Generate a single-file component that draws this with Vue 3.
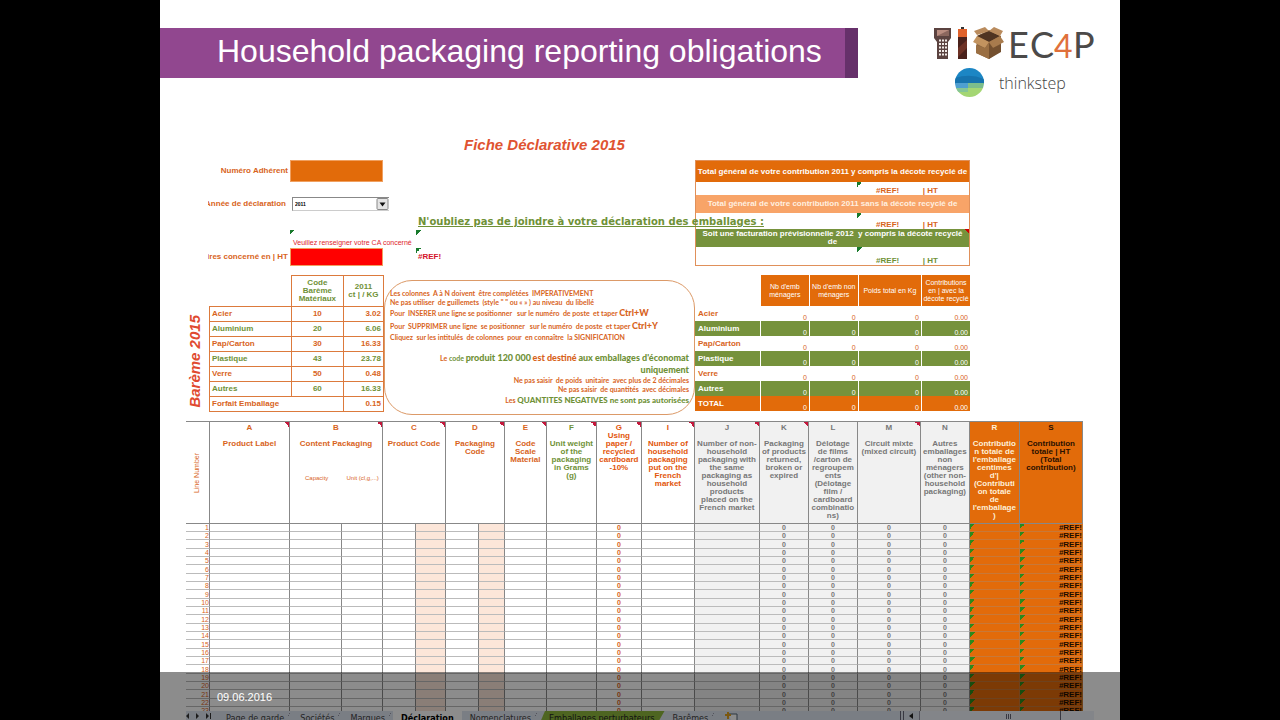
<script setup>
const scale = [
  ['Acier', '10', '3.02'],
  ['Aluminium', '20', '6.06'],
  ['Pap/Carton', '30', '16.33'],
  ['Plastique', '43', '23.78'],
  ['Verre', '50', '0.48'],
  ['Autres', '60', '16.33'],
]
const totals = ['Acier', 'Aluminium', 'Pap/Carton', 'Plastique', 'Verre', 'Autres', 'TOTAL']

const widths = [24, 80, 52, 41, 33, 30, 33, 26, 42, 50, 45, 53, 65, 49, 49, 63, 49, 50, 63]
const sum = widths.reduce((a, b) => a + b, 0)
const cols = widths.map((w) => (w / sum) * 100 + '%')

const heads = [
  { l: 'A', t: 'Product Label', c: 'note' },
  { l: 'B', t: 'Content Packaging', c: 'note', span: 2, sub: true },
  { l: 'C', t: 'Product Code', c: 'note', span: 2 },
  { l: 'D', t: 'Packaging\nCode', c: 'note', span: 2 },
  { l: 'E', t: 'Code\nScale\nMaterial', c: 'note' },
  { l: 'F', t: 'Unit weight\nof the\npackaging\nin Grams\n(g)', c: 'note olive' },
  { l: 'G', t: 'Using\npaper /\nrecycled\ncardboard\n-10%', c: 'note tight vivid' },
  { l: 'I', t: 'Number of\nhousehold\npackaging\nput on the\nFrench\nmarket', c: 'note vivid' },
  { l: 'J', t: 'Number of non-\nhousehold\npackaging with\nthe same\npackaging as\nhousehold\nproducts\nplaced on the\nFrench market', c: 'note grey' },
  { l: 'K', t: 'Packaging\nof products\nreturned,\nbroken or\nexpired', c: 'note grey' },
  { l: 'L', t: 'Délotage\nde films\n/carton de\nregroupem\nents\n(Délotage\nfilm /\ncardboard\ncombinatio\nns)', c: 'grey' },
  { l: 'M', t: 'Circuit mixte\n(mixed circuit)', c: 'note grey' },
  { l: 'N', t: 'Autres\nemballages\nnon\nménagers\n(other non-\nhousehold\npackaging)', c: 'grey' },
  { l: 'R', t: "Contributio\nn totale de\nl'emballage\ncentimes\nd'|\n(Contributi\non totale\nde\nl'emballage\n)", c: 'fill pale' },
  { l: 'S', t: 'Contribution\ntotale | HT\n(Total\ncontribution)', c: 'fill dark' },
]
const cells = [
  '', '', '', '', 'peach', '', 'peach', '', '', 'zero', '', 'grey', 'grey zero', 'grey zero', 'grey zero', 'grey zero', 'fill flag', 'fill flag ref',
]
const tabs = [
  { t: 'Page de garde' },
  { t: 'Sociétés' },
  { t: 'Marques' },
  { t: 'Déclaration', c: 'current' },
  { t: 'Nomenclatures' },
  { t: 'Emballages perturbateurs', c: 'green' },
  { t: 'Barêmes' },
]
</script>

<template>
  <main class="slide">
    <header class="top">
      <h1>Household packaging reporting obligations</h1>
      <svg class="logo" viewBox="0 0 162 74" role="img" aria-label="TIC EC4P thinkstep">
        <path d="M1 3h17v10l-3 4v17H4V17l-3-4z" fill="#5b4340" />
        <path d="M4 5h12v6H4z" fill="#b98d80" />
        <path d="M4 11L16 5v6z" fill="#8b675e" />
        <path d="M6 15.500h8M6 19h8M6 22.500h8M6 26h8M6 29.500h8" stroke="#f3ece8" stroke-width="2" stroke-dasharray="2 1" />
        <path d="M28 2h3v2h-3z" fill="#333" />
        <path d="M25 4h9v8h-9z" fill="#e0622c" />
        <path d="M25 12h9v22h-9z" fill="#4a211b" />
        <path d="M25 23l9-8v8l-9 9z" fill="#6d3125" />
        <path d="M44 11l12-6 12 6v14l-12 9-13-6z" fill="#8d6640" />
        <path d="M44 11l12-5 11 5-11 6z" fill="#4f3422" />
        <path d="M44 10l-3-4 11-4 4 4zM56 6l5-4 9 4-3 5z" fill="#b98b5d" />
        <path d="M44 11l12 6-4 6-12-6z" fill="#c2935f" />
        <path d="M67 11l-11 6 4 6 11-6z" fill="#a87b4d" />
        <path d="M43 20l9 3 4-5v16l-13-6z" fill="#9a6f43" />
        <path d="M56 18l4 5 8-4v8l-12 7z" fill="#74502f" />
        <g class="brand">
          <text x="75" y="33">E</text>
          <text x="97" y="33">C</text>
          <text class="four" x="121" y="33">4</text>
          <text x="140" y="33">P</text>
        </g>
        <clipPath id="ball"><circle cx="36.500" cy="57.500" r="14.500" /></clipPath>
        <g clip-path="url(#ball)">
          <path d="M22 43h29v15H22z" fill="#1c86c4" />
          <path d="M22 53q15-5 29 1v5H22z" fill="#1673ae" />
          <path d="M22 58h13v5H22z" fill="#4f9fd0" />
          <path d="M35 58h16v5H35z" fill="#7cbd8c" />
          <path d="M22 63h29v10H22z" fill="#a4d673" />
          <path d="M22 63h13v4H22z" fill="#85c596" />
        </g>
        <text class="step" x="66" y="64">thinkstep</text>
      </svg>
    </header>

    <h2>Fiche Déclarative 2015</h2>

    <section class="upper">
      <form class="fields">
        <label for="num" class="numlabel">Numéro Adhérent</label>
        <input id="num" class="num" type="text" />
        <label for="year" class="yearlabel">Année de déclaration</label>
        <span class="pick">
          <select id="year"><option>2011</option></select>
          <svg viewBox="0 0 12 12" aria-hidden="true"><rect x=".5" y=".5" width="11" height="11" rx="1" fill="#e4e4e4" stroke="#888" /><path d="M3 4.500h6l-3 4z" fill="#111" /></svg>
        </span>
        <span class="hint flagged">Veuillez renseigner votre CA concerné</span>
        <label for="ca" class="calabel">ires concerné en | HT</label>
        <input id="ca" class="ca" type="text" />
      </form>
      <div class="reminder">
        <p class="join">N'oubliez pas de joindre à votre déclaration des emballages :</p>
        <p class="blank flagged"></p>
        <p class="err flagged">#REF!</p>
      </div>
      <table class="general">
        <colgroup><col class="wide" /><col class="mid" /><col /></colgroup>
        <tbody>
          <tr class="bar first"><th colspan="3">Total général de votre contribution 2011 y compris la décote recyclé de</th></tr>
          <tr class="r1"><td></td><td class="flagged">#REF!</td><td>| HT</td></tr>
          <tr class="bar light"><th colspan="3">Total général de votre contribution 2011 sans la décote recyclé de</th></tr>
          <tr class="r2"><td></td><td class="flagged">#REF!</td><td>| HT</td></tr>
          <tr class="bar olivebar"><th colspan="3">Soit une facturation prévisionnelle 2012 &nbsp;y compris la décote recyclé<br />de</th></tr>
          <tr class="r3"><td></td><td class="flagged">#REF!</td><td>| HT</td></tr>
        </tbody>
      </table>
    </section>

    <section class="lower">
      <h3>Barème 2015</h3>
      <table class="scale">
        <colgroup><col class="c1" /><col class="c2" /><col class="c3" /></colgroup>
        <thead>
          <tr><td></td><th>Code<br />Barème<br />Matériaux</th><th>2011<br />ct | / KG</th></tr>
        </thead>
        <tbody>
          <tr v-for="r in scale" :key="r[0]"><th>{{ r[0] }}</th><td class="code">{{ r[1] }}</td><td>{{ r[2] }}</td></tr>
          <tr><th colspan="2">Forfait Emballage</th><td>0.15</td></tr>
        </tbody>
      </table>
      <div class="guide">
        <p>Les colonnes&nbsp; A à N doivent&nbsp; être complétées&nbsp; IMPERATIVEMENT</p>
        <p>Ne pas utiliser&nbsp; de guillemets&nbsp; (style " " ou « » ) au niveau&nbsp; du libellé</p>
        <p class="tall">Pour&nbsp; INSERER une ligne se positionner&nbsp; &nbsp;sur le numéro&nbsp; de poste&nbsp; et taper <b>Ctrl+W</b></p>
        <p class="tall">Pour&nbsp; SUPPRIMER une ligne&nbsp; se positionner&nbsp; &nbsp;sur le numéro&nbsp; de poste&nbsp; et taper <b>Ctrl+Y</b></p>
        <p>Cliquez&nbsp; sur les intitulés&nbsp; de colonnes&nbsp; pour&nbsp; en connaître&nbsp; la SIGNIFICATION</p>
        <p class="end big gap">Le <i>code</i> <b class="olive">produit 120 000</b> <b>est destiné</b> <b class="olive">aux emballages d'économat</b></p>
        <p class="end big"><b class="olive">uniquement</b></p>
        <p class="end">Ne pas saisir&nbsp; de poids&nbsp; unitaire&nbsp; avec plus de 2 décimales</p>
        <p class="end">Ne pas saisir&nbsp; de quantités&nbsp; avec décimales</p>
        <p class="end big">Les <b class="olive neg">QUANTITES NEGATIVES ne sont pas autorisées</b></p>
      </div>
      <table class="sums">
        <colgroup><col class="s1" /><col class="s2" /><col class="s2" /><col class="s3" /><col class="s2" /></colgroup>
        <thead>
          <tr><td></td><th>Nb d'emb<br />ménagers</th><th>Nb d'emb non<br />ménagers</th><th>Poids total en Kg</th><th>Contributions<br />en | avec la<br />décote recyclé</th></tr>
        </thead>
        <tbody>
          <tr v-for="t in totals" :key="t"><th>{{ t }}</th><td>0</td><td>0</td><td>0</td><td>0.00</td></tr>
        </tbody>
      </table>
    </section>

    <div class="gridwrap">
      <table class="grid">
        <colgroup><col v-for="(w, i) in cols" :key="i" :style="{ width: w }" /></colgroup>
        <thead>
          <tr>
            <th class="line"><span>Line Number</span></th>
            <th v-for="h in heads" :key="h.l" :colspan="h.span || 1" :class="h.c">
              <span class="letter">{{ h.l }}</span>
              <span class="name">{{ h.t }}</span>
              <span v-if="h.sub" class="sub"><span>Capacity</span><span>Unit (cl,g,...)</span></span>
            </th>
          </tr>
        </thead>
        <tbody>
          <tr v-for="n in 23" :key="n">
            <th>{{ n }}</th>
            <td v-for="(c, i) in cells" :key="i" :class="c">{{ c.includes('zero') ? '0' : c.includes('ref') ? '#REF!' : '' }}</td>
          </tr>
        </tbody>
      </table>
    </div>

    <nav class="tabs">
      <svg class="arrows" viewBox="0 0 26 9" aria-hidden="true"><path d="M3 2v6L0 5zM10 2v6l3-3zM20 2v6l3-3zM24 2h1v6h-1z" fill="#333" /></svg>
      <button v-for="t in tabs" :key="t.t" type="button" :class="t.c">{{ t.t }}</button>
      <svg class="new" viewBox="0 0 16 9" aria-hidden="true"><path d="M5 3h8v7H7" fill="#fff" stroke="#567" /><path d="M4 1v7M1 4h6" stroke="#e0a020" stroke-width="2" /></svg>
      <svg class="ctrl" viewBox="0 0 20 9" aria-hidden="true"><path d="M1.500 0v9M4.500 0v9" stroke="#667" /><path d="M14 2v6l-4-3z" fill="#222" /></svg>
      <span class="scroll"><svg viewBox="0 0 174 9" aria-hidden="true"><path d="M86.500 3v5M88.500 3v5M90.500 3v5M140.500 0v9" stroke="#667" /></svg></span>
    </nav>

    <footer>09.06.2016</footer>
  </main>
</template>

<style>
body {
  background: #000;
}
</style>

<style scoped>
.slide {
  position: relative;
  display: flex;
  flex-direction: column;
  height: 100vh;
  margin: 0 12.5%;
  overflow: hidden;
  background: #fff;
  color: #d8641c;
  font: 8px/8px "Liberation Sans", Arial, sans-serif;
}
.slide * {
  box-sizing: border-box;
}
h1, h2, h3, p {
  margin: 0;
}
table {
  width: 100%;
  table-layout: fixed;
  border-collapse: separate;
  border-spacing: 0;
}
th, td {
  padding: 0;
}
.olive {
  color: #6f9137;
}
.flagged {
  background: linear-gradient(135deg, #187a2c 50%, transparent 50%) left top / 5px 5px no-repeat;
}

.top {
  display: grid;
  grid-template-columns: minmax(0, 698fr) minmax(0, 262fr);
  align-items: start;
  padding-top: 25px;
}
h1 {
  height: 50px;
  margin-top: 3px;
  padding-left: 57px;
  border-right: 13px solid #66306a;
  background: #91478f;
  color: #fff;
  font-size: 32px;
  font-weight: 400;
  line-height: 46px;
  white-space: nowrap;
}
.logo {
  width: 162px;
  height: 74px;
  margin-left: 75px;
  overflow: visible;
}
.brand text {
  fill: #4c4a49;
  font: 36px Lato, sans-serif;
}
.brand .four {
  fill: #e0703a;
  font-size: 32px;
}
.step {
  fill: #444;
  font: 300 16px "Open Sans", sans-serif;
}
h2 {
  margin: 37px 0 15px 304px;
  color: #df5331;
  font-size: 15px;
  font-style: italic;
  line-height: 18px;
}

.upper, .lower {
  display: grid;
  margin: 0 37px 0 26px;
  align-items: start;
}
.upper {
  grid-template-columns: minmax(0, 197fr) minmax(0, 312fr) minmax(0, 275fr) minmax(0, 113fr);
  height: 115px;
  margin-top: -9px;
}
.fields {
  display: grid;
  grid-template-columns: minmax(0, 82fr) minmax(0, 93fr);
  grid-template-rows: 37px 33px 18px 18px;
  align-items: start;
  padding-left: 22px;
  font-weight: 700;
}
.fields label {
  display: flex;
  justify-content: flex-end;
  padding-right: 2px;
  overflow: hidden;
  line-height: 18px;
  white-space: nowrap;
}
.fields .numlabel {
  line-height: 22px;
}
.fields .yearlabel {
  padding-right: 4px;
  line-height: 14px;
}
.fields input {
  width: 100%;
  height: 22px;
  padding: 0 2px;
  border: 1px solid #f0a060;
  background: #e26b0a;
}
.fields .ca {
  height: 18px;
  background: #f00;
}
.pick {
  position: relative;
  width: 97px;
  height: 14px;
  margin-left: 2px;
}
.pick select {
  display: block;
  width: 100%;
  height: 100%;
  padding: 0 2px;
  appearance: none;
  border: 1px solid #888;
  border-width: 1px 0 1px 1px;
  border-bottom-color: #ccc;
  border-radius: 0;
  background: #fff;
  color: #000;
  font: 700 5px "Liberation Sans", sans-serif;
}
.pick svg {
  position: absolute;
  top: 1px;
  right: 0;
  width: 13px;
  height: 12px;
}
.hint {
  grid-column: 2;
  height: 18px;
  padding: 9px 0 0 3px;
  color: #e0242c;
  font-size: 7px;
  font-weight: 400;
  white-space: nowrap;
}
.reminder {
  padding: 55px 0 0 33px;
}
.reminder p {
  padding-left: 2px;
}
.join {
  position: relative;
  z-index: 1;
  color: #6f9137;
  font: 700 10px/13px "DejaVu Sans", sans-serif;
  text-decoration: underline;
  white-space: nowrap;
}
.reminder .blank {
  height: 18px;
  margin-top: 2px;
}
.reminder .err {
  padding-top: 5px;
  color: #d4142c;
  font-weight: 700;
}
.general {
  border: 1px solid #e0905a;
  font-weight: 700;
}
.wide {
  width: 59%;
}
.mid {
  width: 23%;
}
.bar th {
  background: #e26b0a;
  color: #fff;
  white-space: nowrap;
}
.first th {
  height: 21px;
}
.light th {
  height: 18px;
  background: #f8a468;
  color: #fff0e0;
}
.olivebar th {
  height: 18px;
  background: linear-gradient(225deg, #c00 50%, transparent 50%) right top / 4px 4px no-repeat, #76923c;
}
.general td {
  vertical-align: bottom;
}
.general .flagged {
  padding-left: 19px;
}
.general td:last-child {
  padding-left: 3px;
}
.r1 td {
  height: 13px;
}
.r2 td {
  height: 16px;
}
.r3 td {
  height: 18px;
  color: #6f9137;
}

.lower {
  grid-template-columns: minmax(0, 23fr) minmax(0, 175fr) minmax(0, 311fr) minmax(0, 275fr) minmax(0, 113fr);
  height: 146px;
}
h3 {
  align-self: start;
  justify-self: start;
  margin-top: 40px;
  color: #e04a30;
  font-size: 15px;
  font-style: italic;
  line-height: 18px;
  white-space: nowrap;
  writing-mode: vertical-rl;
  rotate: 180deg;
}
.scale {
  border-collapse: collapse;
  font-weight: 700;
}
.c1 {
  width: 47%;
}
.c2 {
  width: 30%;
}
.scale thead th {
  height: 31px;
  color: #6f9137;
}
.scale th, .scale tbody td {
  border: 1px solid #dc7a3c;
}
.scale tbody th, .scale tbody td {
  height: 15px;
  padding: 0 2px;
  text-align: left;
}
.scale tbody td {
  text-align: right;
}
.scale tbody .code {
  text-align: center;
}
.scale tbody tr:nth-child(even) {
  color: #6f9137;
}
.guide {
  height: 135px;
  margin-top: 5px;
  padding: 8px 5px;
  border: 1px solid #dc9a68;
  border-radius: 28px;
  font: 700 7px/9px Lato, sans-serif;
  white-space: nowrap;
}
.guide p {
  height: 9px;
}
.guide .tall {
  height: 13px;
  line-height: 13px;
}
.guide .big {
  height: 12px;
  line-height: 12px;
}
.guide b {
  font-size: 9px;
  line-height: 9px;
}
.guide .neg {
  font-size: 8px;
}
.guide i {
  color: #6f9137;
  font-style: normal;
}
.guide .end {
  text-align: right;
}
.guide .gap {
  margin-top: 10px;
}
.sums th {
  color: #d8641c;
  font-weight: 700;
}
.s1 {
  width: 23.6%;
}
.s2 {
  width: 17.8%;
}
.s3 {
  width: 23%;
}
.sums thead th {
  height: 31px;
  border-left: 1px solid #fff;
  background: #e26b0a;
  color: #fff;
  font-size: 7px;
  font-weight: 400;
  white-space: nowrap;
}
.sums tbody th {
  height: 15px;
  padding-left: 3px;
  text-align: left;
}
.sums tbody td {
  padding-right: 2px;
  border-left: 1px solid #fff;
  font-size: 7px;
  line-height: 7px;
  text-align: right;
  vertical-align: bottom;
}
.sums tbody tr:nth-child(even), .sums tbody tr:nth-child(even) th {
  background: #76923c;
  color: #fff;
}
.sums tbody tr:last-child, .sums tbody tr:last-child th {
  background: #e26b0a;
  color: #fff;
}

.gridwrap {
  flex: 1;
  min-height: 0;
  margin: 0 37px 0 26px;
  overflow: hidden;
}
.grid thead th {
  height: 102px;
  padding-top: 2px;
  border-top: 1px solid #888;
  border-right: 1px solid #888;
  vertical-align: top;
}
.grid span {
  display: block;
}
.grid .name {
  margin-top: 8px;
  white-space: pre;
}
.grid .tight .name {
  margin-top: 0;
}
.grid .sub {
  display: grid;
  grid-template-columns: minmax(0, 58fr) minmax(0, 42fr);
  justify-items: center;
  margin-top: 26px;
  font-size: 6px;
  font-weight: 400;
  white-space: nowrap;
}
.grid .line {
  vertical-align: middle;
  font-size: 7px;
  font-weight: 400;
}
.grid .line span {
  margin: 0 auto;
  writing-mode: vertical-rl;
  rotate: 180deg;
}
.grid .note {
  background: linear-gradient(225deg, #c4183c 50%, transparent 50%) right top / 5px 5px no-repeat;
}
.grid .vivid {
  color: #e2560c;
}
.grid .grey {
  background-color: #f1f1f1;
  color: #777;
}
.grid .fill {
  background-color: #e26b0a;
}
.grid .pale {
  color: #fff0d8;
}
.grid .dark {
  color: #2a1000;
}
.grid tbody th, .grid tbody td {
  height: 8px;
  border-top: 1px solid #bbb;
  border-right: 1px solid #888;
  font-size: 7px;
  line-height: 7px;
  text-align: center;
}
.grid tbody tr:first-child > * {
  border-top-color: #888;
}
.grid tbody tr:nth-child(3n) > * {
  height: 9px;
}
.grid tbody th {
  font-weight: 400;
  text-align: right;
}
.grid tbody .zero {
  font-weight: 700;
}
.grid .peach {
  background: #fce6d9;
}
.grid .flag {
  border-color: #c87838;
  background-image: linear-gradient(135deg, #2c8a1c 50%, transparent 50%);
  background-size: 5px 5px;
  background-repeat: no-repeat;
}
.grid tbody .ref {
  color: #1c0c00;
  font-size: 8px;
  font-weight: 700;
  text-align: right;
}

.tabs {
  display: flex;
  height: 9px;
  margin: 0 26px;
  overflow: hidden;
  background: #dfe5f0;
}
.tabs svg {
  flex: none;
  height: 9px;
}
.arrows {
  width: 26px;
  margin-right: 6px;
}
.tabs button {
  flex: none;
  height: 14px;
  padding: 0 8px;
  border: 0;
  background: linear-gradient(120deg, transparent 49%, #99a 49%, #99a 51%, transparent 51%) right top / 10px 14px no-repeat;
  color: #444;
  font: 9px/12px "DejaVu Sans Condensed", "DejaVu Sans", sans-serif;
}
.tabs .current {
  background: #fff;
  color: #000;
  font-weight: 700;
}
.tabs .green {
  padding: 0 10px;
  background: #8fb93c;
  color: #222;
  clip-path: polygon(6px 0, 100% 0, calc(100% - 8px) 100%, 0 100%);
}
.new {
  width: 16px;
  margin-left: 8px;
}
.ctrl {
  width: 20px;
  margin-left: auto;
}
.scroll {
  flex: 0 1 174px;
  border-left: 1px solid #99a;
  background: #eef2fa;
}
footer {
  position: absolute;
  right: 0;
  bottom: 0;
  left: 0;
  height: 48px;
  padding-left: 57px;
  background: rgba(0, 0, 0, 0.45);
  color: #fff;
  font-size: 11px;
  line-height: 50px;
}
</style>
